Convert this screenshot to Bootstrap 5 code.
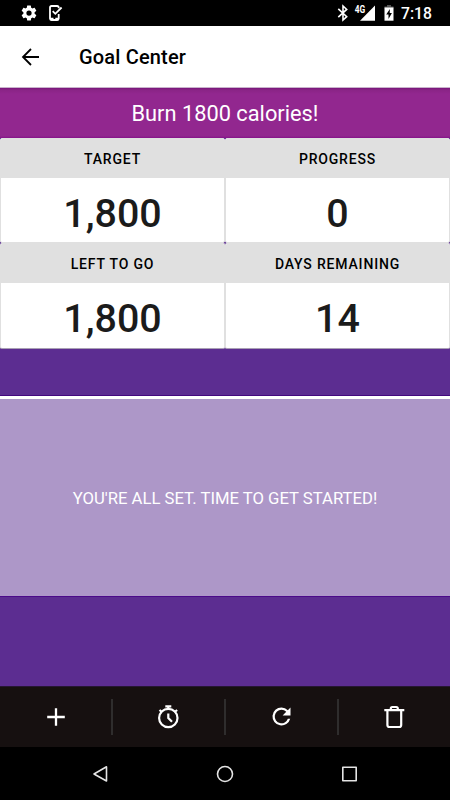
<!DOCTYPE html>
<html lang="en">
<head>
<meta charset="utf-8">
<meta name="viewport" content="width=device-width, initial-scale=1">
<title>Goal Center</title>
<link href="https://cdn.jsdelivr.net/npm/bootstrap@5.3.0/dist/css/bootstrap.min.css" rel="stylesheet">
<style>
body{font-family:Roboto,sans-serif;background:#5c2d91;height:800px;width:450px;overflow:hidden}
svg{display:block;flex:none}
.status{height:26px;background:#000;color:#fff;padding:0 18px 0 20px}
.clock{font-size:15.7px;font-weight:500;line-height:24px;padding-top:2px;margin-left:7px;width:31px;white-space:nowrap}
.topbar{height:62px;background:#fff;border-bottom:1px solid #c9b3cc;padding-left:20px}
.topbar h1{font-size:20px;font-weight:500;color:#000;margin:1px 0 0 37px;line-height:24px;letter-spacing:.17px}
.goal{height:50px;background:linear-gradient(#78157a 0,#8a2486 2px,#92278f 6px,#92278f 48px,#85128a 50px);color:#fff;font-size:21.8px;line-height:52px}
.cell-card{height:105px;background:#fff;border:1px solid #e0e0e0;border-radius:2px;overflow:hidden}
.cell-head{height:39px;background:#e0e0e0;color:#000;font-size:14px;font-weight:500;line-height:41px;letter-spacing:.82px}
.cell-num{font-size:39.4px;font-weight:500;color:#1b1b1b;line-height:72px}
.stats>div:nth-child(n+3) .cell-card{height:106px;border-bottom-color:#a9a0b4}
.gap-band{height:47px;border-bottom:1px solid #44087f}
.message{height:200px;background:#ad97c8;border-top:3px solid #fff;color:#fff;font-size:16.68px;padding-top:2px}
.lower{height:90px;border-top:1px solid #4b0a8a}
.actions{height:61px;background:#161010;border-top:1px solid #261633;padding-bottom:1px}
.actions>div{height:100%}
.sep{width:2px;height:36px;background:#2f2d2d}
.sysnav{height:53px;background:#000}
</style>
<script src="https://cdn.jsdelivr.net/npm/bootstrap@5.3.0/dist/js/bootstrap.bundle.min.js"></script>
</head>
<body class="d-flex flex-column mx-0">
<div class="status d-flex align-items-center flex-shrink-0">
  <svg width="18" height="18" viewBox="0 0 24 24" fill="#fff"><path d="M19.43 12.98c.04-.32.07-.64.07-.98s-.03-.66-.07-.98l2.11-1.65c.19-.15.24-.42.12-.64l-2-3.46c-.12-.22-.39-.3-.61-.22l-2.49 1c-.52-.4-1.08-.73-1.69-.98l-.38-2.65A.49.49 0 0 0 14 2h-4c-.25 0-.46.18-.49.42l-.38 2.65c-.61.25-1.17.59-1.69.98l-2.49-1c-.23-.09-.49 0-.61.22l-2 3.46c-.13.22-.07.49.12.64l2.11 1.65c-.04.32-.07.65-.07.98s.03.66.07.98l-2.11 1.65c-.19.15-.24.42-.12.64l2 3.46c.12.22.39.3.61.22l2.49-1c.52.4 1.08.73 1.69.98l.38 2.65c.03.24.24.42.49.42h4c.25 0 .46-.18.49-.42l.38-2.65c.61-.25 1.17-.59 1.69-.98l2.49 1c.23.09.49 0 .61-.22l2-3.46c.12-.22.07-.49-.12-.64zM12 15.5a3.5 3.5 0 1 1 0-7 3.500 3.500 0 0 1 0 7z"/></svg>
  <svg class="ms-2" width="18" height="18" viewBox="0 0 18 18" fill="none" stroke="#fff"><path stroke-width="1.800" d="M12.700 4.200V3.500Q12.700 2 11.200 2H5.500Q4 2 4 3.500V14.500Q4 16 5.500 16H11.200Q12.700 16 12.700 14.500V10"/><path stroke-width="2.600" d="M4 15H7.500M9.300 15H12.700"/><path stroke-width="1.800" d="M6.700 7.200L9.300 9.800L15.600 3.500"/></svg>
  <svg class="ms-auto" width="14" height="18" viewBox="0 0 14 18" fill="none" stroke="#fff" stroke-width="1.600"><path d="M2.300 4.800L10.700 12.700L7 16V2L10.700 5.400L2.300 13.200"/></svg>
  <svg class="ms-1" width="22" height="18" viewBox="0 0 22 18"><path d="M21 1.500V16.800H6z" fill="#fff"/><text x=".8" y="8.600" font-family="Roboto" font-weight="700" font-size="10" textLength="10.500" lengthAdjust="spacingAndGlyphs" fill="#fff" stroke="#000" stroke-width="1.200" paint-order="stroke">4G</text></svg>
  <svg class="ms-2" width="10" height="18" viewBox="0 0 10 18"><path d="M3 1h4v1.500h2.500v2H.5v-2H3z" fill="#555"/><path d="M.5 3.500h9v13.200h-9z" fill="#fff"/><path d="M5.900 5L2.200 10.500h2.300v4.500L7.900 9H5.700z" fill="#000"/></svg>
  <span class="clock">7:18</span>
</div>
<header class="topbar d-flex align-items-center flex-shrink-0">
  <svg width="22" height="20" viewBox="0 0 22 20" fill="none" stroke="#000" stroke-width="1.800"><path d="M19 10H3M11 2L3 10L11 18"/></svg>
  <h1>Goal Center</h1>
</header>
<div class="goal text-center flex-shrink-0">Burn 1800 calories!</div>
<main class="stats row g-0 text-center flex-shrink-0">
  <div class="col-6"><div class="cell-card"><div class="cell-head">TARGET</div><div class="cell-num">1,800</div></div></div>
  <div class="col-6"><div class="cell-card"><div class="cell-head">PROGRESS</div><div class="cell-num">0</div></div></div>
  <div class="col-6"><div class="cell-card"><div class="cell-head">LEFT TO GO</div><div class="cell-num">1,800</div></div></div>
  <div class="col-6"><div class="cell-card"><div class="cell-head">DAYS REMAINING</div><div class="cell-num">14</div></div></div>
</main>
<div class="gap-band flex-shrink-0"></div>
<section class="message d-flex align-items-center justify-content-center flex-shrink-0">YOU'RE ALL SET. TIME TO GET STARTED!</section>
<div class="lower flex-shrink-0"></div>
<footer class="actions d-flex align-items-center flex-shrink-0">
  <div class="flex-fill d-flex align-items-center justify-content-center w-25"><svg width="24" height="24" viewBox="0 0 24 24" fill="none" stroke="#fff" stroke-width="2.300"><path d="M12 3.200V20.800M3.200 12H20.800"/></svg></div>
  <i class="sep"></i>
  <div class="flex-fill d-flex align-items-center justify-content-center w-25"><svg width="24" height="24" viewBox="0 0 24 24" fill="none" stroke="#fff" stroke-width="2.200"><circle cx="12.300" cy="13" r="9.200"/><path d="M9.300 1.300H15.300M12.300 1.300V4M3.500 5L6.100 7.300M21.100 5L18.500 7.300M12.300 8.500V13L16 16.800"/></svg></div>
  <i class="sep"></i>
  <div class="flex-fill d-flex align-items-center justify-content-center w-25"><svg width="27" height="27" viewBox="0 0 24 24" fill="#fff"><path d="M17.650 6.350A7.960 7.960 0 0 0 12 4a8 8 0 1 0 7.730 10h-2.080A6 6 0 1 1 12 6c1.660 0 3.140.69 4.220 1.780L13 11h7V4z"/></svg></div>
  <i class="sep"></i>
  <div class="flex-fill d-flex align-items-center justify-content-center w-25"><svg width="24" height="24" viewBox="0 0 24 24" fill="none" stroke="#fff" stroke-width="2.200"><path d="M2.300 5.200H22.300M8.800 5V3.500Q8.800 2 10.300 2H14.300Q15.800 2 15.800 3.500V5M5.400 5.500V20Q5.400 22 7.400 22H17.200Q19.200 22 19.200 20V5.500"/></svg></div>
</footer>
<nav class="sysnav d-flex align-items-center justify-content-center flex-shrink-0">
  <svg width="450" height="24" viewBox="0 0 450 24" fill="none" stroke="#e4e4e4" stroke-width="1.600" stroke-linejoin="round"><path d="M106.500 4.800V19L94 12z"/><circle cx="225" cy="12" r="7.500"/><rect x="342.800" y="5.300" width="13.400" height="13.400"/></svg>
</nav>
</body>
</html>
